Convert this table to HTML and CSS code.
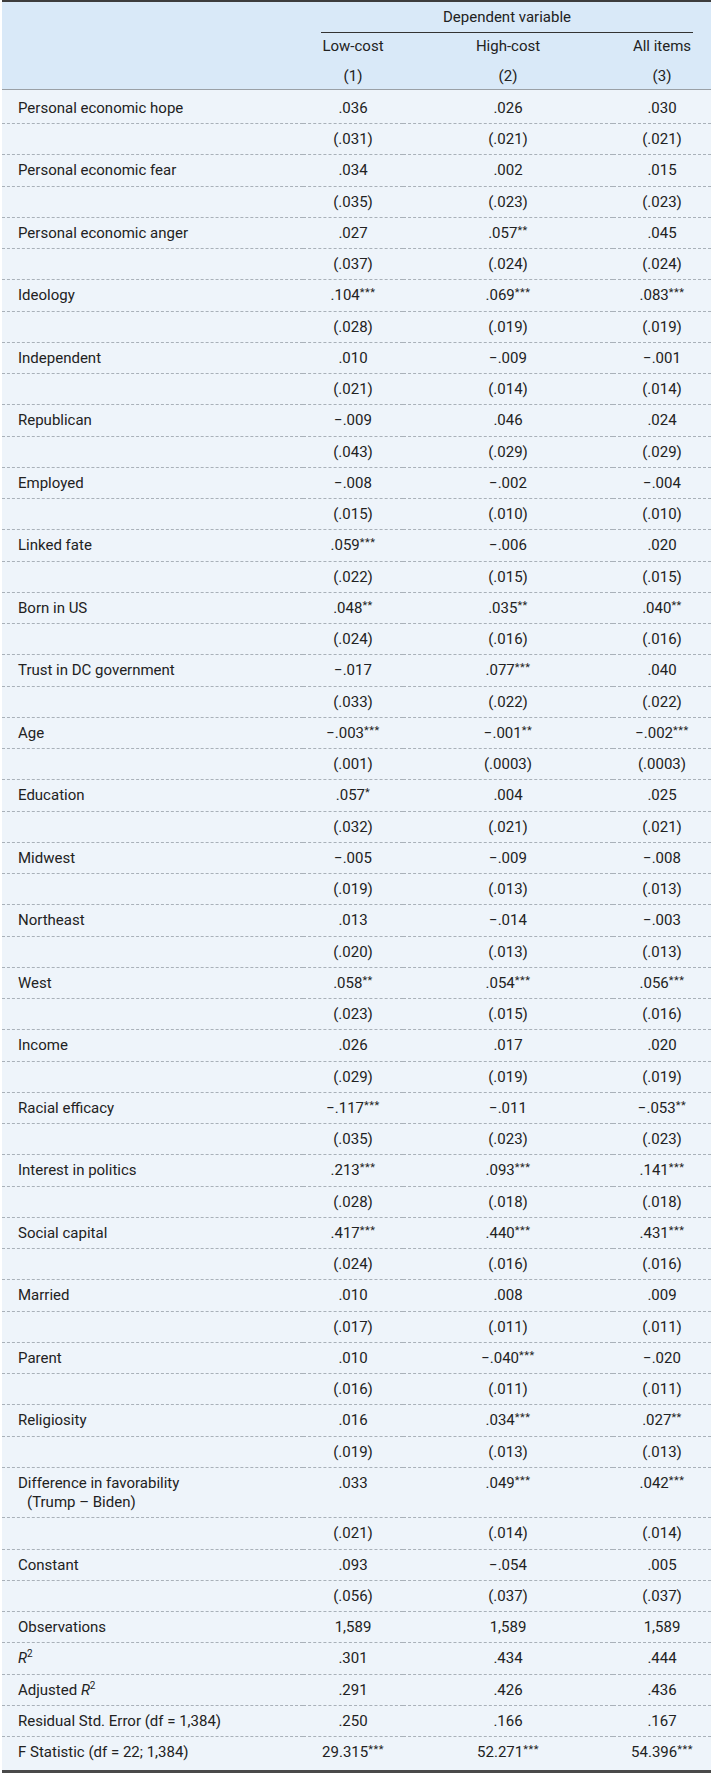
FILE: index.html
```html
<!DOCTYPE html>
<html lang="en">
<head>
<meta charset="utf-8">
<title>Regression table</title>
<link rel="stylesheet" href="styles.css">
</head>
<body>
<table class="reg">
  <colgroup>
    <col class="c-label"><col class="c-1"><col class="c-2"><col class="c-3">
  </colgroup>
  <thead>
    <tr class="h-top">
      <th></th>
      <th colspan="3"><div class="dep">Dependent variable</div></th>
    </tr>
    <tr class="h-mid">
      <th></th><th>Low-cost</th><th>High-cost</th><th>All items</th>
    </tr>
    <tr class="h-bot">
      <th></th><th>(1)</th><th>(2)</th><th>(3)</th>
    </tr>
  </thead>
  <tbody>
    <tr class="first"><td>Personal economic hope</td><td>.036</td><td>.026</td><td>.030</td></tr>
    <tr><td></td><td>(.031)</td><td>(.021)</td><td>(.021)</td></tr>
    <tr><td>Personal economic fear</td><td>.034</td><td>.002</td><td>.015</td></tr>
    <tr><td></td><td>(.035)</td><td>(.023)</td><td>(.023)</td></tr>
    <tr><td>Personal economic anger</td><td>.027</td><td>.057<sup>**</sup></td><td>.045</td></tr>
    <tr><td></td><td>(.037)</td><td>(.024)</td><td>(.024)</td></tr>
    <tr><td>Ideology</td><td>.104<sup>***</sup></td><td>.069<sup>***</sup></td><td>.083<sup>***</sup></td></tr>
    <tr><td></td><td>(.028)</td><td>(.019)</td><td>(.019)</td></tr>
    <tr><td>Independent</td><td>.010</td><td>−.009</td><td>−.001</td></tr>
    <tr><td></td><td>(.021)</td><td>(.014)</td><td>(.014)</td></tr>
    <tr><td>Republican</td><td>−.009</td><td>.046</td><td>.024</td></tr>
    <tr><td></td><td>(.043)</td><td>(.029)</td><td>(.029)</td></tr>
    <tr><td>Employed</td><td>−.008</td><td>−.002</td><td>−.004</td></tr>
    <tr><td></td><td>(.015)</td><td>(.010)</td><td>(.010)</td></tr>
    <tr><td>Linked fate</td><td>.059<sup>***</sup></td><td>−.006</td><td>.020</td></tr>
    <tr><td></td><td>(.022)</td><td>(.015)</td><td>(.015)</td></tr>
    <tr><td>Born in US</td><td>.048<sup>**</sup></td><td>.035<sup>**</sup></td><td>.040<sup>**</sup></td></tr>
    <tr><td></td><td>(.024)</td><td>(.016)</td><td>(.016)</td></tr>
    <tr><td>Trust in DC government</td><td>−.017</td><td>.077<sup>***</sup></td><td>.040</td></tr>
    <tr><td></td><td>(.033)</td><td>(.022)</td><td>(.022)</td></tr>
    <tr><td>Age</td><td>−.003<sup>***</sup></td><td>−.001<sup>**</sup></td><td>−.002<sup>***</sup></td></tr>
    <tr><td></td><td>(.001)</td><td>(.0003)</td><td>(.0003)</td></tr>
    <tr><td>Education</td><td>.057<sup>*</sup></td><td>.004</td><td>.025</td></tr>
    <tr><td></td><td>(.032)</td><td>(.021)</td><td>(.021)</td></tr>
    <tr><td>Midwest</td><td>−.005</td><td>−.009</td><td>−.008</td></tr>
    <tr><td></td><td>(.019)</td><td>(.013)</td><td>(.013)</td></tr>
    <tr><td>Northeast</td><td>.013</td><td>−.014</td><td>−.003</td></tr>
    <tr><td></td><td>(.020)</td><td>(.013)</td><td>(.013)</td></tr>
    <tr><td>West</td><td>.058<sup>**</sup></td><td>.054<sup>***</sup></td><td>.056<sup>***</sup></td></tr>
    <tr><td></td><td>(.023)</td><td>(.015)</td><td>(.016)</td></tr>
    <tr><td>Income</td><td>.026</td><td>.017</td><td>.020</td></tr>
    <tr><td></td><td>(.029)</td><td>(.019)</td><td>(.019)</td></tr>
    <tr><td>Racial efficacy</td><td>−.117<sup>***</sup></td><td>−.011</td><td>−.053<sup>**</sup></td></tr>
    <tr><td></td><td>(.035)</td><td>(.023)</td><td>(.023)</td></tr>
    <tr><td>Interest in politics</td><td>.213<sup>***</sup></td><td>.093<sup>***</sup></td><td>.141<sup>***</sup></td></tr>
    <tr><td></td><td>(.028)</td><td>(.018)</td><td>(.018)</td></tr>
    <tr><td>Social capital</td><td>.417<sup>***</sup></td><td>.440<sup>***</sup></td><td>.431<sup>***</sup></td></tr>
    <tr><td></td><td>(.024)</td><td>(.016)</td><td>(.016)</td></tr>
    <tr><td>Married</td><td>.010</td><td>.008</td><td>.009</td></tr>
    <tr><td></td><td>(.017)</td><td>(.011)</td><td>(.011)</td></tr>
    <tr><td>Parent</td><td>.010</td><td>−.040<sup>***</sup></td><td>−.020</td></tr>
    <tr><td></td><td>(.016)</td><td>(.011)</td><td>(.011)</td></tr>
    <tr><td>Religiosity</td><td>.016</td><td>.034<sup>***</sup></td><td>.027<sup>**</sup></td></tr>
    <tr><td></td><td>(.019)</td><td>(.013)</td><td>(.013)</td></tr>
    <tr><td>Difference in favorability<br><span class="cont">(Trump – Biden)</span></td><td>.033</td><td>.049<sup>***</sup></td><td>.042<sup>***</sup></td></tr>
    <tr><td></td><td>(.021)</td><td>(.014)</td><td>(.014)</td></tr>
    <tr><td>Constant</td><td>.093</td><td>−.054</td><td>.005</td></tr>
    <tr><td></td><td>(.056)</td><td>(.037)</td><td>(.037)</td></tr>
    <tr><td>Observations</td><td>1,589</td><td>1,589</td><td>1,589</td></tr>
    <tr><td><i>R</i><sup class="sq">2</sup></td><td>.301</td><td>.434</td><td>.444</td></tr>
    <tr><td>Adjusted <i>R</i><sup class="sq">2</sup></td><td>.291</td><td>.426</td><td>.436</td></tr>
    <tr><td>Residual Std. Error (df = 1,384)</td><td>.250</td><td>.166</td><td>.167</td></tr>
    <tr class="last"><td>F Statistic (df = 22; 1,384)</td><td>29.315<sup>***</sup></td><td>52.271<sup>***</sup></td><td>54.396<sup>***</sup></td></tr>
  </tbody>
</table>
</body>
</html>
```

FILE: styles.css
```css
html, body {
  margin: 0;
  padding: 0;
  background: #ffffff;
}

body {
  font-family: Roboto, "Liberation Sans", sans-serif;
  font-size: 15px;
  color: #222222;
}

.reg {
  width: 709px;
  margin: 0 2px;
  table-layout: fixed;
  border-collapse: collapse;
  border-spacing: 0;
  border-top: 2px solid #3d3d3d;
  border-bottom: 3px solid #4a4a4a;
  line-height: 19.25px;
}

.c-label { width: 301px; }
.c-1 { width: 100px; }
.c-2 { width: 210px; }
.c-3 { width: 98px; }

thead {
  background: #d9e9f8;
}

th {
  font-weight: normal;
  text-align: center;
  padding: 0;
}

.h-top th {
  padding: 6px 18px 0 18px;
}

.dep {
  padding-bottom: 5px;
  border-bottom: 1px solid #333333;
}

.h-mid th {
  padding: 4px 0 5px;
}

.h-bot th {
  padding: 5px 0 3px;
  border-bottom: 1px solid #9aa0a6;
}

tbody {
  background: #eef4fa;
}

td {
  padding: 6px 0 5px;
  text-align: center;
  vertical-align: top;
  border-bottom: 1px dashed #a9b1b9;
}

td:first-child {
  text-align: left;
  padding-left: 16px;
}

.first td {
  padding-top: 9px;
}

.last td {
  border-bottom: none;
  padding-bottom: 8px;
}

.cont {
  padding-left: 9px;
}

sup {
  font-size: 11px;
  line-height: 0;
  vertical-align: 4px;
  letter-spacing: 0.5px;
}

sup.sq {
  font-size: 10px;
  vertical-align: 6px;
  letter-spacing: 0;
}
```
